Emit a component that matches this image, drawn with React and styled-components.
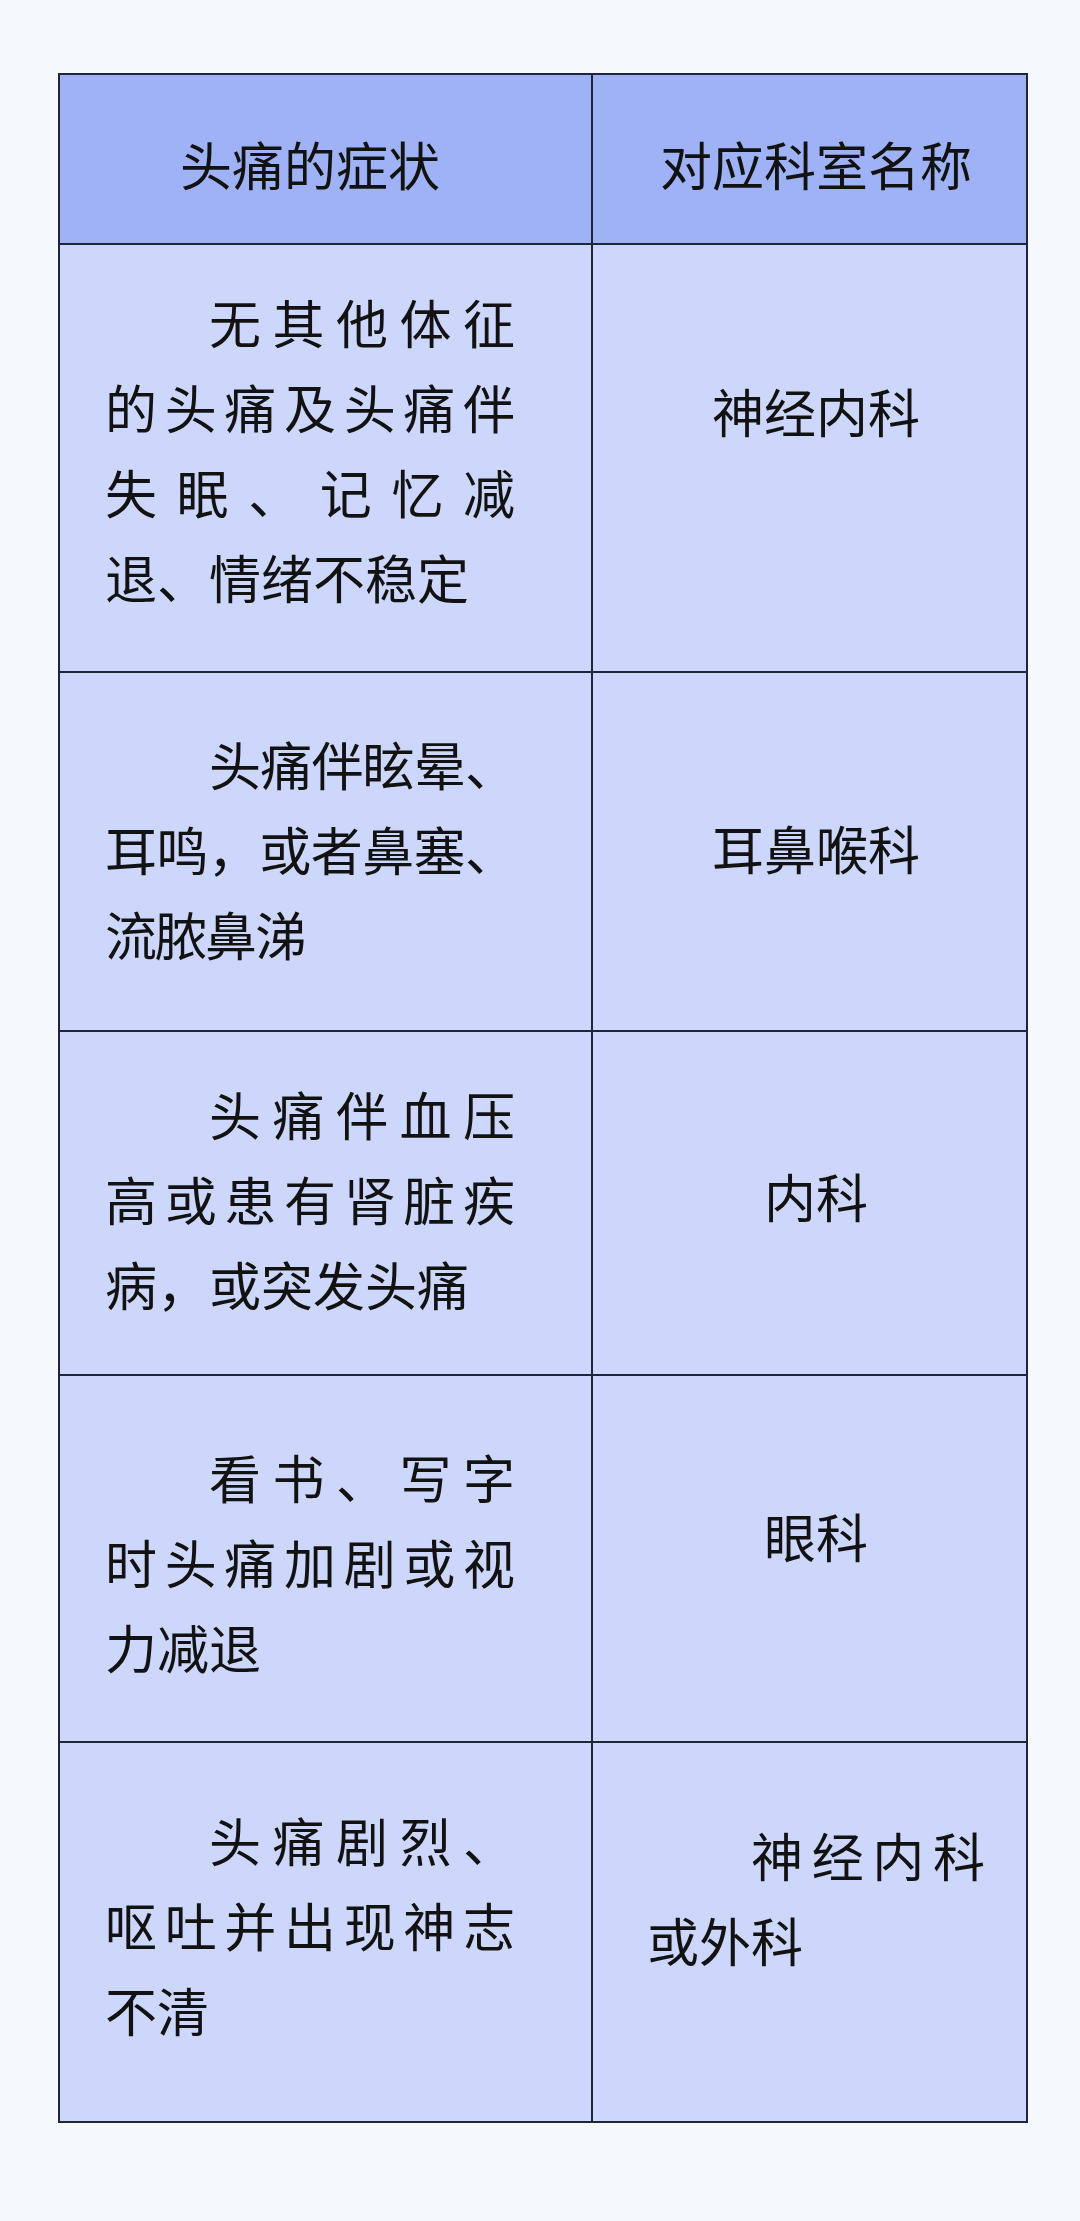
import React from "react";
import styled, { createGlobalStyle } from "styled-components";

const GlobalStyle = createGlobalStyle`
  html, body {
    margin: 0;
    padding: 0;
    background: #f5f8fc;
  }
  body {
    font-family: "Noto Sans CJK SC", "Noto Sans", sans-serif;
    color: #121212;
  }
`;

const Page = styled.main`
  min-height: 2221px;
  box-sizing: border-box;
  padding: 73px 0 0 58px;
`;

const Table = styled.div`
  display: grid;
  width: 970px;
  box-sizing: border-box;
  grid-template-columns: 531px 433px;
  grid-template-rows: 168px 426px 357px 342px 365px 378px;
  gap: 2px;
  padding: 2px;
  background: #1f2638;
`;

const Cell = styled.div`
  box-sizing: border-box;
  display: flex;
  flex-direction: column;
  justify-content: center;
  background: ${(p) => (p.$head ? "#9fb2f6" : "#cdd6fb")};
  padding-left: ${(p) => (p.$side === "left" ? 45 : 54)}px;
  padding-right: ${(p) => (p.$side === "left" ? 76 : 41)}px;
  padding-top: ${(p) => Math.max(0, -2 * (p.$lift || 0))}px;
  padding-bottom: ${(p) => Math.max(0, 2 * (p.$lift || 0))}px;
`;

const Text = styled.p`
  margin: 0;
  font-size: 52px;
  line-height: 85px;
  text-spacing-trim: space-all;
  letter-spacing: ${(p) => p.$tight ? "-2px" : "0"};
  text-align: ${(p) => (p.$align === "center" ? "center" : "justify")};
  text-indent: ${(p) => (p.$align === "center" ? "0" : "2em")};
  word-break: break-all;
`;

const rows = [
  {
    symptom: "无其他体征的头痛及头痛伴失眠、记忆减退、情绪不稳定",
    dept: "神经内科",
    liftL: 9,
    liftR: 48,
  },
  {
    symptom: "头痛伴眩晕、耳鸣，或者鼻塞、流脓鼻涕",
    dept: "耳鼻喉科",
    liftL: 3.5,
    liftR: 4.5,
    tight: true,
  },
  {
    symptom: "头痛伴血压高或患有肾脏疾病，或突发头痛",
    dept: "内科",
    liftL: 5,
    liftR: 8,
  },
  {
    symptom: "看书、写字时头痛加剧或视力减退",
    dept: "眼科",
    liftL: -3,
    liftR: 23.5,
  },
  {
    symptom: "头痛剧烈、呕吐并出现神志不清",
    dept: "神经内科或外科",
    liftL: 8,
    liftR: 35.5,
    deptJustify: true,
  },
];

export default function App() {
  return (
    <>
      <GlobalStyle />
      <Page>
        <Table>
          <Cell $head $side="left" $lift={-4}>
            <Text $align="center">头痛的症状</Text>
          </Cell>
          <Cell $head $side="right" $lift={-4}>
            <Text $align="center">对应科室名称</Text>
          </Cell>
          {rows.map((r) => (
            <React.Fragment key={r.symptom}>
              <Cell $side="left" $lift={r.liftL}>
                <Text $tight={r.tight}>{r.symptom}</Text>
              </Cell>
              <Cell $side="right" $lift={r.liftR}>
                <Text $align={r.deptJustify ? "justify" : "center"}>{r.dept}</Text>
              </Cell>
            </React.Fragment>
          ))}
        </Table>
      </Page>
    </>
  );
}
